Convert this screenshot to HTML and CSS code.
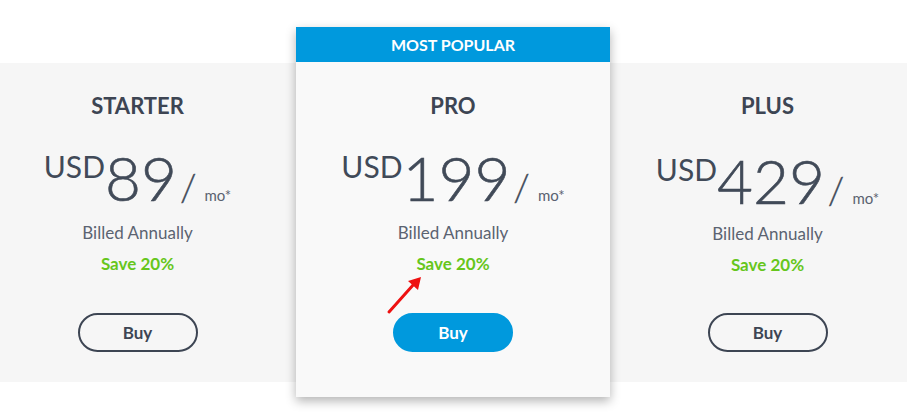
FILE: index.html
```html
<!DOCTYPE html>
<html lang="en">
<head>
<meta charset="utf-8">
<title>Pricing</title>
<link rel="stylesheet" href="styles.css">
</head>
<body>
<div class="page">
  <section class="band">
    <div class="plans">
      <div class="plan">
        <h2 class="plan-title">STARTER</h2>
        <div class="price">
          <span class="currency">USD</span><span class="amount">89</span><span class="slash">/</span><span class="period">mo*</span>
        </div>
        <p class="billed">Billed Annually</p>
        <p class="save">Save 20%</p>
        <button class="buy">Buy</button>
      </div>
      <div class="plan plan-featured">
        <div class="ribbon">MOST POPULAR</div>
        <h2 class="plan-title">PRO</h2>
        <div class="price">
          <span class="currency">USD</span><span class="amount">199</span><span class="slash">/</span><span class="period">mo*</span>
        </div>
        <p class="billed">Billed Annually</p>
        <p class="save">Save 20%</p>
        <button class="buy buy-primary">Buy</button>
      </div>
      <div class="plan plan-plus">
        <h2 class="plan-title">PLUS</h2>
        <div class="price">
          <span class="currency">USD</span><span class="amount">429</span><span class="slash">/</span><span class="period">mo*</span>
        </div>
        <p class="billed">Billed Annually</p>
        <p class="save">Save 20%</p>
        <button class="buy">Buy</button>
      </div>
    </div>
  </section>
  <svg class="arrow" width="50" height="50" viewBox="0 0 50 50" aria-hidden="true">
    <line x1="9" y1="42" x2="34" y2="14" stroke="#ee1111" stroke-width="3" stroke-linecap="round"/>
    <polygon points="41,7 38,20 28,11" fill="#ee1111"/>
  </svg>
</div>
</body>
</html>
```

FILE: styles.css
```css
html, body {
  margin: 0;
  padding: 0;
  background: #ffffff;
  overflow: hidden;
}

.page {
  position: relative;
  width: 907px;
  height: 413px;
  overflow: hidden;
  font-family: "Lato", "Noto Sans", sans-serif;
  color: #3d4553;
}

.band {
  margin-top: 63px;
  height: 319px;
  background: #f6f6f6;
}

.plans {
  display: grid;
  grid-template-columns: 315px 315px 315px;
  margin-left: -20px;
  height: 319px;
}

.plan {
  display: flex;
  flex-direction: column;
  align-items: center;
  padding-top: 30px;
}

.plan-featured {
  align-self: start;
  margin-top: -36px;
  height: 370px;
  padding-top: 0;
  margin-left: 1px;
  background: #f9f9f9;
  box-shadow: 0 4px 10px rgba(0, 0, 0, 0.3);
  position: relative;
  z-index: 1;
}

.ribbon {
  align-self: stretch;
  height: 35px;
  margin-bottom: 31px;
  background: #0099dd;
  color: #ffffff;
  font-weight: 700;
  font-size: 16px;
  line-height: 35px;
  text-align: center;
}

.plan-title {
  margin: 0;
  font-size: 22px;
  line-height: 26px;
  font-weight: 700;
  color: #3d4553;
}

.price {
  display: flex;
  align-items: baseline;
  margin-top: 27px;
  height: 62px;
  color: #414a58;
}

.plan-plus .price {
  margin-top: 30px;
}

.plan-plus .billed {
  margin-top: 13px;
}

.plan-plus .buy {
  margin-top: 38px;
}

.currency {
  align-self: flex-start;
  margin-top: 5px;
  font-size: 30px;
  line-height: 30px;
  font-weight: 400;
  margin-right: 0;
}

.amount {
  font-size: 62px;
  line-height: 62px;
  font-weight: 300;
  -webkit-text-stroke: 0.6px currentColor;
}

.slash {
  font-size: 38px;
  line-height: 38px;
  font-weight: 300;
  -webkit-text-stroke: 0.4px currentColor;
  margin-left: 3px;
  margin-right: 8px;
}

.period {
  font-size: 15px;
  line-height: 16px;
  color: #5a6270;
}

.billed {
  margin: 15px 0 0;
  font-size: 17px;
  line-height: 20px;
  color: #5b6371;
}

.save {
  margin: 11px 0 0;
  font-size: 17px;
  line-height: 20px;
  font-weight: 700;
  color: #66c61c;
}

.buy {
  margin-top: 39px;
  width: 120px;
  height: 39px;
  border: 2px solid #3d4553;
  border-radius: 20px;
  background: transparent;
  font-family: "Lato", "Noto Sans", sans-serif;
  font-size: 17px;
  font-weight: 700;
  color: #3d4553;
  padding: 0;
}

.buy-primary {
  background: #0099dd;
  border-color: #0099dd;
  color: #ffffff;
}

.arrow {
  position: absolute;
  left: 380px;
  top: 270px;
  z-index: 2;
}
```
